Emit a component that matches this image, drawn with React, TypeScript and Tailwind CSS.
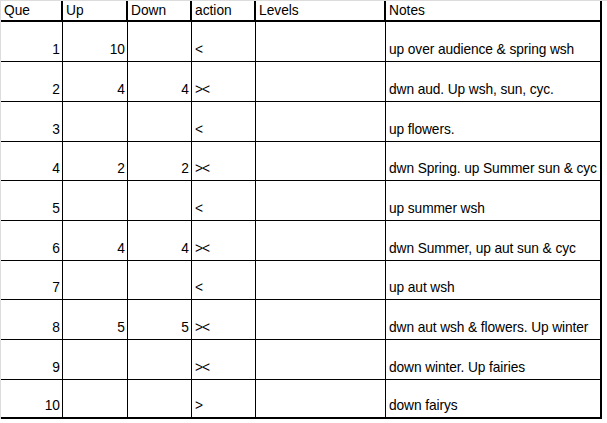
import React from "react";

const rows: { q: string; up: string; down: string; action: string; notes: string; h: string }[] = [
  { q: "1", up: "10", down: "", action: "<", notes: "up over audience & spring wsh", h: "h-[40px]" },
  { q: "2", up: "4", down: "4", action: "><", notes: "dwn aud. Up wsh, sun, cyc.", h: "h-[40px]" },
  { q: "3", up: "", down: "", action: "<", notes: "up flowers.", h: "h-[40px]" },
  { q: "4", up: "2", down: "2", action: "><", notes: "dwn Spring. up Summer sun & cyc", h: "h-[39px]" },
  { q: "5", up: "", down: "", action: "<", notes: "up summer wsh", h: "h-[40px]" },
  { q: "6", up: "4", down: "4", action: "><", notes: "dwn Summer, up aut sun & cyc", h: "h-[40px]" },
  { q: "7", up: "", down: "", action: "<", notes: "up aut wsh", h: "h-[39px]" },
  { q: "8", up: "5", down: "5", action: "><", notes: "dwn aut wsh & flowers. Up winter", h: "h-[40px]" },
  { q: "9", up: "", down: "", action: "><", notes: "down winter. Up fairies", h: "h-[40px]" },
  { q: "10", up: "", down: "", action: ">", notes: "down fairys", h: "h-[39px]" },
];

const cols = "grid grid-cols-[62px_65px_64px_64px_130px_216px]";

export default function App() {
  return (
    <div
      className="w-[607px] h-[423px] bg-white text-black overflow-hidden text-[13.75px] leading-[16px]"
      style={{ fontFamily: '"Liberation Sans", Arial, sans-serif' }}
    >
      <div className="h-px bg-[#dcdcdc]" />
      <div className="flex">
        <div className="w-px bg-[#dcdcdc] self-stretch" />
        <div className="flex flex-col">
          <div className={`${cols} h-[21px]`}>
            {["Que", "Up", "Down", "action", "Levels", "Notes"].map((t) => (
              <div
                key={t}
                className="border-r-2 border-b-2 border-black flex items-end pl-[3px] pb-px whitespace-nowrap"
              >
                {t}
              </div>
            ))}
          </div>
          {rows.map((r, i) => {
            const last = i === rows.length - 1;
            const bb = last ? "border-b-2" : "border-b";
            return (
              <div key={r.q} className={`${cols} ${r.h}`}>
                <div className={`border-r ${bb} border-black flex items-end justify-end pr-[2px] pb-[3px]`}>
                  {r.q}
                </div>
                <div className={`border-r ${bb} border-black flex items-end justify-end pr-[2px] pb-[3px]`}>
                  {r.up}
                </div>
                <div className={`border-r ${bb} border-black flex items-end justify-end pr-[2px] pb-[3px]`}>
                  {r.down}
                </div>
                <div className={`border-r ${bb} border-black flex items-end pl-[3px] pb-[3px]`}>
                  <span className="tracking-[-1px]">{r.action}</span>
                </div>
                <div className={`border-r ${bb} border-black`} />
                <div className={`border-r-2 ${bb} border-black flex items-end pl-[3px] pb-[3px] whitespace-nowrap tracking-[-0.1px]`}>
                  {r.notes}
                </div>
              </div>
            );
          })}
        </div>
      </div>
    </div>
  );
}
